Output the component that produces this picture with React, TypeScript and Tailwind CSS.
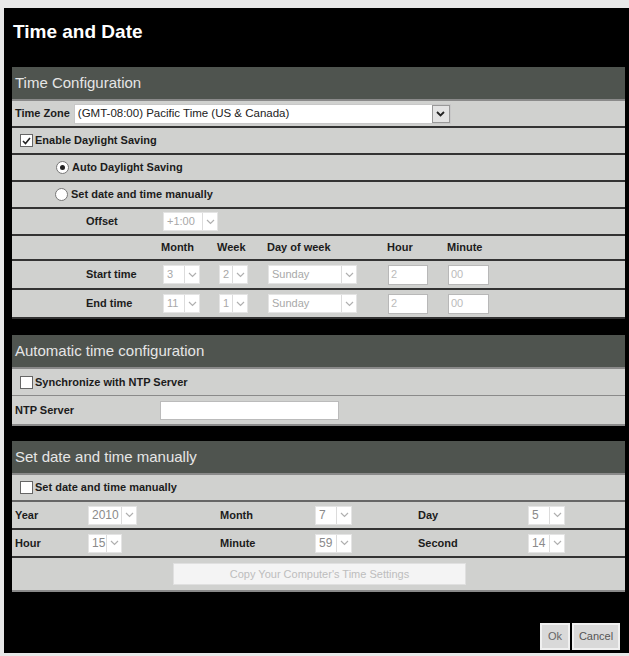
import React from "react";

const font = { fontFamily: '"Liberation Sans", Arial, sans-serif' };

function Chevron({ dark }: { dark?: boolean }) {
  return (
    <svg width="9" height="6" viewBox="0 0 9 6" fill="none">
      <path
        d="M1 1l3.5 3.5L8 1"
        stroke={dark ? "#222" : "#b0b0b0"}
        strokeWidth={dark ? 1.8 : 1.2}
      />
    </svg>
  );
}

function Select({ value, className, textClass = "text-[#a8a8a8]" }: { value: string; className: string; textClass?: string }) {
  return (
    <div className={`flex h-[19px] items-center bg-white border border-[#e4e4e4] ${className}`}>
      <span className={`flex-1 pl-[3px] text-[11px] leading-none ${textClass}`}>{value}</span>
      <span className="flex h-full w-[15px] items-center justify-center border-l border-[#dcdcdc]">
        <Chevron />
      </span>
    </div>
  );
}

function Field({ value, className }: { value?: string; className: string }) {
  return (
    <div className={`flex h-[20px] items-center bg-white border border-[#b8b8b8] pl-[2px] text-[11px] text-[#bbb] ${className}`}>
      {value}
    </div>
  );
}

function Checkbox({ checked }: { checked?: boolean }) {
  return (
    <span className="flex h-[13px] w-[13px] items-center justify-center border border-[#666] bg-white">
      {checked && (
        <svg width="9" height="8" viewBox="0 0 9 8" fill="none">
          <path d="M1 4l2.5 2.5L8 1" stroke="#222" strokeWidth="1.6" />
        </svg>
      )}
    </span>
  );
}

function Radio({ checked }: { checked?: boolean }) {
  return (
    <span className="flex h-[13px] w-[13px] items-center justify-center rounded-full border border-[#777] bg-white">
      {checked && <span className="h-[5px] w-[5px] rounded-full bg-[#222]" />}
    </span>
  );
}

function Header({ children }: { children: React.ReactNode }) {
  return (
    <div className="flex h-[34px] items-center border-b-2 border-[#8a8a8a] bg-[#4f544f] pl-[3px] text-[15px] text-[#e6e6e6]">
      {children}
    </div>
  );
}

const label = "text-[11px] font-bold text-[#1c1c1c]";

export default function App() {
  return (
    <div className="min-h-[656px] bg-[#e8e8e8] pl-1 pt-2" style={font}>
      <div className="h-[645px] w-[625px] bg-black pl-2 pr-1">
        {/* Title */}
        <div className="h-[59px] pl-[1px] pt-[10px] text-[19px] font-bold text-white">Time and Date</div>

        {/* Time Configuration */}
        <Header>Time Configuration</Header>
        <div className="bg-[#d0d1cf]">
          <div className="flex h-[27px] items-center gap-[4px] border-b-2 border-[#333] pl-[3px]">
            <span className={label}>Time Zone</span>
            <div className="flex h-[20px] w-[377px] items-center border border-[#c8c8c8] bg-white">
              <span className="flex-1 pl-[3px] text-[11.5px] text-[#222]">(GMT-08:00) Pacific Time (US &amp; Canada)</span>
              <span className="flex h-full w-[18px] items-center justify-center border border-[#999] bg-[#e4e4e4]">
                <Chevron dark />
              </span>
            </div>
          </div>
          <div className="flex h-[27px] items-center gap-[2px] border-b-2 border-[#333] pl-[8px]">
            <Checkbox checked />
            <span className={label}>Enable Daylight Saving</span>
          </div>
          <div className="flex h-[27px] items-center gap-[3px] border-b-2 border-[#333] pl-[44px]">
            <Radio checked />
            <span className={label}>Auto Daylight Saving</span>
          </div>
          <div className="flex h-[27px] items-center gap-[3px] border-b-2 border-[#333] pl-[43px]">
            <Radio />
            <span className={label}>Set date and time manually</span>
          </div>
          <div className="flex h-[27px] items-center border-b-2 border-[#333] pl-[74px]">
            <span className={`w-[77px] ${label}`}>Offset</span>
            <Select value="+1:00" className="w-[55px]" />
          </div>
          <div className="flex h-[25px] items-center border-b-2 border-[#333] pl-[74px]">
            <span className="w-[75px]" />
            <span className={`w-[56px] ${label}`}>Month</span>
            <span className={`w-[50px] ${label}`}>Week</span>
            <span className={`w-[120px] ${label}`}>Day of week</span>
            <span className={`w-[60px] ${label}`}>Hour</span>
            <span className={label}>Minute</span>
          </div>
          {[
            ["Start time", "3", "2"],
            ["End time", "11", "1"],
          ].map(([name, m, w]) => (
            <div key={name} className="flex h-[29px] items-center border-b-2 border-[#333] pl-[74px]">
              <span className={`w-[77px] ${label}`}>{name}</span>
              <div className="w-[56px]">
                <Select value={m} className="w-[37px]" />
              </div>
              <div className="w-[49px]">
                <Select value={w} className="w-[29px]" />
              </div>
              <div className="w-[120px]">
                <Select value="Sunday" className="w-[89px]" />
              </div>
              <div className="w-[60px]">
                <Field value="2" className="w-[40px]" />
              </div>
              <Field value="00" className="w-[41px]" />
            </div>
          ))}
        </div>

        <div className="h-[16px]" />

        {/* Automatic time configuration */}
        <Header>Automatic time configuration</Header>
        <div className="bg-[#d0d1cf]">
          <div className="flex h-[27px] items-center gap-[2px] border-b border-[#8a8a8a] pl-[8px]">
            <Checkbox />
            <span className={label}>Synchronize with NTP Server</span>
          </div>
          <div className="flex h-[30px] items-center border-b-2 border-[#8a8a8a] pl-[3px]">
            <span className={`w-[145px] ${label}`}>NTP Server</span>
            <div className="h-[19px] w-[179px] border border-[#bbb] bg-white" />
          </div>
        </div>

        <div className="h-[15px]" />

        {/* Set date and time manually */}
        <Header>Set date and time manually</Header>
        <div className="bg-[#d0d1cf]">
          <div className="flex h-[27px] items-center gap-[2px] border-b-2 border-[#666] pl-[8px]">
            <Checkbox />
            <span className={label}>Set date and time manually</span>
          </div>
          {[
            ["Year", "2010", "w-[49px]", "Month", "7", "Day", "5"],
            ["Hour", "15", "w-[34px]", "Minute", "59", "Second", "14"],
          ].map(([a, av, aw, b, bv, c, cv]) => (
            <div key={a} className="flex h-[28px] items-center border-b-2 border-[#333] pl-[3px]">
              <span className={`w-[73px] ${label}`}>{a}</span>
              <div className="w-[132px]">
                <Select value={av} className={aw} textClass="text-[#8a8a8a] text-[12px]" />
              </div>
              <span className={`w-[95px] ${label}`}>{b}</span>
              <div className="w-[103px]">
                <Select value={bv} className="w-[37px]" textClass="text-[#8a8a8a] text-[12px]" />
              </div>
              <span className={`w-[110px] ${label}`}>{c}</span>
              <Select value={cv} className="w-[37px]" textClass="text-[#8a8a8a] text-[12px]" />
            </div>
          ))}
          <div className="flex h-[34px] items-center border-b-2 border-[#8a8a8a] pl-[161px]">
            <button className="h-[22px] w-[293px] border border-[#e0e0e0] bg-[#f4f4f4] text-[11px] text-[#bdbdbd]">
              Copy Your Computer&apos;s Time Settings
            </button>
          </div>
        </div>

        {/* Footer buttons */}
        <div className="flex justify-end gap-[2px] pr-[5px] pt-[31px]">
          <button className="h-[27px] w-[30px] border-2 border-[#f0f0f0] bg-[#d9d9d9] text-[11px] text-[#666]">Ok</button>
          <button className="h-[27px] w-[48px] border-2 border-[#f0f0f0] bg-[#d9d9d9] text-[11px] text-[#555]">Cancel</button>
        </div>
      </div>
    </div>
  );
}
